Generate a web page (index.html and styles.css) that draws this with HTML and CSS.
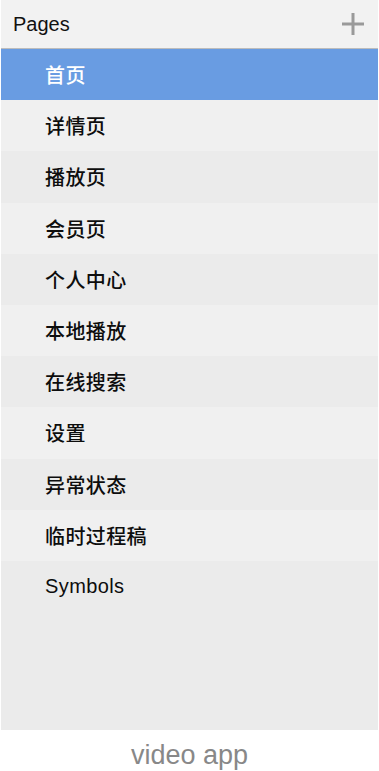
FILE: index.html
```html
<!DOCTYPE html>
<html lang="zh">

<head>
    <meta charset="UTF-8">
    <meta name="viewport" content="width=device-width, initial-scale=1.0">
    <title>video app</title>
    <link rel="stylesheet" href="styles.css">
</head>

<body>

    <div class="panel">
        <div class="header">
            <span class="title">Pages</span>
            <svg class="add" width="24" height="24" viewBox="0 0 24 24">
                <path d="M12 1V23M1 12H23" stroke="#9a9a9a" stroke-width="3" fill="none" />
            </svg>
        </div>
        <div class="list">
            <div class="row selected">首页</div>
            <div class="row">详情页</div>
            <div class="row">播放页</div>
            <div class="row">会员页</div>
            <div class="row">个人中心</div>
            <div class="row">本地播放</div>
            <div class="row">在线搜索</div>
            <div class="row">设置</div>
            <div class="row">异常状态</div>
            <div class="row">临时过程稿</div>
            <div class="row">Symbols</div>
        </div>
    </div>

    <p class="caption">video app</p>

</body>

</html>
```

FILE: styles.css
```css
body {
    margin: 0;
    background-color: #fff;
    font-family: "Liberation Sans", "Noto Sans CJK SC", sans-serif;
}

.panel {
    display: flex;
    flex-direction: column;
    width: 377px;
    height: 730px;
    margin-left: 1px;
    background-color: #ebebeb;
}

.header {
    display: flex;
    justify-content: space-between;
    align-items: center;
    height: 48px;
    padding: 0 13px 0 12px;
    background-color: #f2f2f2;
    border-bottom: 1px solid #bcbcbc;
}

.title {
    font-size: 20px;
    color: #111;
}

.list {
    display: flex;
    flex-direction: column;
}

.row {
    display: flex;
    align-items: center;
    height: 51.2px;
    padding-left: 44px;
    font-size: 20px;
    font-weight: 500;
    letter-spacing: 0.4px;
    color: #0d0d0d;
}

.row:nth-child(odd) {
    background-color: #ebebeb;
}

.row:nth-child(even) {
    background-color: #f0f0f0;
}

.row.selected {
    background-color: #699ce2;
    color: #fff;
}

.caption {
    margin: 10px 0 0;
    text-align: center;
    font-size: 27px;
    color: #888;
}
```
